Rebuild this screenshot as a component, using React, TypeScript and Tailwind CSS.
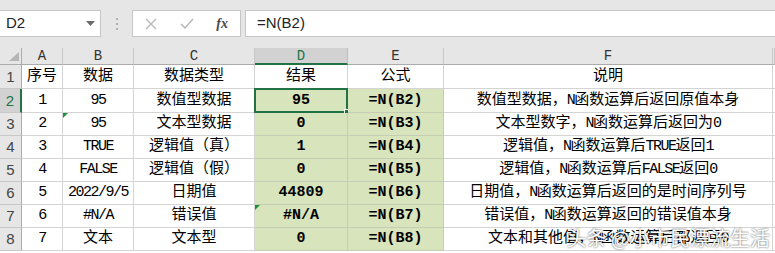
import React from 'react';

const rows: string[][] = [
  ['序号', '数据', '数据类型', '结果', '公式', '说明'],
  ['1', '95', '数值型数据', '95', '=N(B2)', '数值型数据，N函数运算后返回原值本身'],
  ['2', '95', '文本型数据', '0', '=N(B3)', '文本型数字，N函数运算后返回为0'],
  ['3', 'TRUE', '逻辑值（真）', '1', '=N(B4)', '逻辑值，N函数运算后TRUE返回1'],
  ['4', 'FALSE', '逻辑值（假）', '0', '=N(B5)', '逻辑值，N函数运算后FALSE返回0'],
  ['5', '2022/9/5', '日期值', '44809', '=N(B6)', '日期值，N函数运算后返回的是时间序列号'],
  ['6', '#N/A', '错误值', '#N/A', '=N(B7)', '错误值，N函数运算返回的错误值本身'],
  ['7', '文本', '文本型', '0', '=N(B8)', '文本和其他值，N函数运算后都返回0'],
];

const letters = ['A', 'B', 'C', 'D', 'E', 'F', ''];

// ascii runs get squeezed so the mono latin sits at half the CJK width
function Txt({ s }: { s: string }) {
  const parts = s.split(/([\x00-\x7f]+)/).filter(Boolean);
  return (
    <>
      {parts.map((p, i) =>
        /^[\x00-\x7f]+$/.test(p) ? (
          <span key={i} className="tracking-[-1.5px]">{p}</span>
        ) : (
          <span key={i}>{p}</span>
        )
      )}
    </>
  );
}

function Flag() {
  return (
    <svg className="absolute left-0 top-0" width="5" height="5" viewBox="0 0 5 5">
      <polygon points="0,0 5,0 0,5" fill="#1f8f3c" />
    </svg>
  );
}

export default function App() {
  return (
    <div className="relative w-[775px] h-[253px] overflow-hidden bg-white font-[family-name:'Liberation_Mono','Noto_Sans_CJK_SC',monospace] text-black">
      {/* toolbar */}
      <div className="h-[48px] bg-[#e6e6e6] pt-[10px]">
        <div className="flex h-[27px]">
          <div className="w-[101px] bg-white border border-l-0 border-[#c6c6c6] flex items-center justify-between pl-[6px] pr-[5px]">
            <span className="font-['Liberation_Sans',sans-serif] text-[15px] text-[#222]">D2</span>
            <svg width="9" height="5" viewBox="0 0 9 5">
              <polygon points="0,0 9,0 4.5,5" fill="#6b6b6b" />
            </svg>
          </div>
          <div className="w-[31px] flex flex-col items-center justify-center gap-[3px]">
            <span className="w-[2px] h-[2px] bg-[#b0b0b0]" />
            <span className="w-[2px] h-[2px] bg-[#b0b0b0]" />
            <span className="w-[2px] h-[2px] bg-[#b0b0b0]" />
          </div>
          <div className="w-[109px] bg-white border border-[#c6c6c6] flex items-center">
            <div className="w-[36px] flex justify-center">
              <svg width="12" height="12" viewBox="0 0 12 12">
                <path d="M1 1 L11 11 M11 1 L1 11" stroke="#b8b8b8" strokeWidth="1.3" />
              </svg>
            </div>
            <div className="w-[36px] flex justify-center">
              <svg width="14" height="11" viewBox="0 0 14 11">
                <path d="M1 6 L5 10 L13 1" stroke="#b8b8b8" strokeWidth="1.5" fill="none" />
              </svg>
            </div>
            <div className="w-[36px] flex justify-center">
              <span className="font-['Liberation_Serif',serif] italic font-bold text-[14px] text-[#4a4a4a]">fx</span>
            </div>
          </div>
          <div className="ml-[4px] flex-1 bg-white border border-r-0 border-[#c6c6c6] flex items-center pl-[11px]">
            <span className="font-['Liberation_Sans',sans-serif] text-[15px] text-[#222]">=N(B2)</span>
          </div>
        </div>
      </div>

      {/* sheet */}
      <div className="grid grid-cols-[22px_41px_71px_121px_93px_96px_329px_1fr] grid-rows-[17px_24px_24px_23px_23px_23px_23px_23px_23px]">
        <div className="relative bg-[#e6e6e6] border-r border-b border-[#ababab]">
          <svg className="absolute right-[2px] bottom-[3px]" width="10" height="9" viewBox="0 0 10 9">
            <polygon points="10,0 10,9 0,9" fill="#b5b5b5" />
          </svg>
        </div>
        {letters.map((l, i) =>
          l === 'D' ? (
            <div key={i} className="bg-[#d2d2d2] border-r border-[#bdbdbd] border-b-2 border-b-[#217346] flex items-center justify-center text-[14px] leading-none text-[#217346]">
              {l}
            </div>
          ) : (
            <div key={i} className="bg-[#e6e6e6] border-r border-b border-r-[#c8c8c8] border-b-[#ababab] flex items-center justify-center text-[14px] leading-none text-[#333]">
              {l}
            </div>
          )
        )}

        {rows.map((r, ri) => {
          const rowNo = ri + 1;
          const sel = rowNo === 2;
          return (
            <React.Fragment key={ri}>
              <div
                className={
                  sel
                    ? "bg-[#d2d2d2] border-r-2 border-r-[#217346] border-b border-b-[#c8c8c8] flex items-end justify-center pb-[1px] font-['Liberation_Sans',sans-serif] text-[15px] leading-[20px] text-[#217346]"
                    : "bg-[#e6e6e6] border-r border-b border-r-[#ababab] border-b-[#c8c8c8] flex items-end justify-center pb-[1px] font-['Liberation_Sans',sans-serif] text-[15px] leading-[20px] text-[#444]"
                }
              >
                {rowNo}
              </div>
              {r.map((c, ci) => {
                const green = rowNo > 1 && (ci === 3 || ci === 4);
                return (
                  <div
                    key={ci}
                    className={
                      green
                        ? 'relative bg-[#d8e4bc] border-r border-b border-[#c5cdb5] flex items-end justify-center pb-[1px] text-[15px] leading-[20px] font-bold whitespace-nowrap'
                        : 'relative bg-white border-r border-b border-[#d4d4d4] flex items-end justify-center pb-[1px] text-[15px] leading-[20px] whitespace-nowrap'
                    }
                  >
                    {green ? c : <Txt s={c} />}
                    {rowNo === 3 && ci === 1 && <Flag />}
                    {rowNo === 7 && ci === 3 && <Flag />}
                    {rowNo === 2 && ci === 3 && (
                      <div className="absolute -inset-px border-2 border-[#217346]">
                        <div className="absolute -right-[4px] -bottom-[4px] w-[6px] h-[6px] bg-[#217346] border border-white" />
                      </div>
                    )}
                  </div>
                );
              })}
              <div className="bg-white border-b border-[#d4d4d4]" />
            </React.Fragment>
          );
        })}
      </div>

      {/* watermark */}
      <div className="absolute right-[5px] bottom-[3px] font-['Noto_Sans_CJK_SC',sans-serif] text-[20px] leading-[24px] text-white [text-shadow:0_0_2px_rgba(0,0,0,0.8)] whitespace-nowrap">
        头条 @小市民漂流生活
      </div>
    </div>
  );
}
